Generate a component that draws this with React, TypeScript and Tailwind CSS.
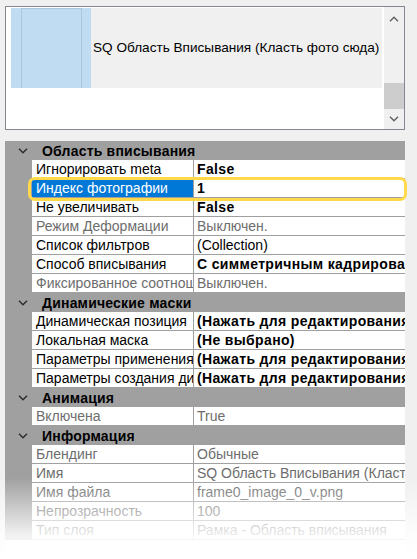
import type { ReactNode } from "react";

type Tone = "bold" | "normal" | "gray";

type Row = {
  label: string;
  selected?: boolean;
  tone: Tone;
  value: string;
};

type Section = { rows: Row[]; title: string };

const sections: Section[] = [
  {
    title: "Область вписывания",
    rows: [
      { label: "Игнорировать meta", tone: "bold", value: "False" },
      { label: "Индекс фотографии", selected: true, tone: "bold", value: "1" },
      { label: "Не увеличивать", tone: "bold", value: "False" },
      { label: "Режим Деформации", tone: "gray", value: "Выключен." },
      { label: "Список фильтров", tone: "normal", value: "(Collection)" },
      {
        label: "Способ вписывания",
        tone: "bold",
        value: "С симметричным кадрированием",
      },
      {
        label: "Фиксированное соотношение",
        tone: "gray",
        value: "Выключен.",
      },
    ],
  },
  {
    title: "Динамические маски",
    rows: [
      {
        label: "Динамическая позиция",
        tone: "bold",
        value: "(Нажать для редактирования)",
      },
      { label: "Локальная маска", tone: "bold", value: "(Не выбрано)" },
      {
        label: "Параметры применения",
        tone: "bold",
        value: "(Нажать для редактирования)",
      },
      {
        label: "Параметры создания динамической маски",
        tone: "bold",
        value: "(Нажать для редактирования)",
      },
    ],
  },
  {
    title: "Анимация",
    rows: [{ label: "Включена", tone: "gray", value: "True" }],
  },
  {
    title: "Информация",
    rows: [
      { label: "Блендинг", tone: "gray", value: "Обычные" },
      {
        label: "Имя",
        tone: "gray",
        value: "SQ Область Вписывания (Класть фото сюда)",
      },
      { label: "Имя файла", tone: "gray", value: "frame0_image_0_v.png" },
      { label: "Непрозрачность", tone: "gray", value: "100" },
      { label: "Тип слоя", tone: "gray", value: "Рамка - Область вписывания" },
    ],
  },
];

function Chevron({ up, className }: { up?: boolean; className: string }) {
  return (
    <svg className={className} viewBox="0 0 10 6" fill="none">
      <path
        d={up ? "M1 5.2L5 1.2L9 5.2" : "M1 0.8L5 4.8L9 0.8"}
        stroke="currentColor"
        strokeWidth="1.4"
      />
    </svg>
  );
}

function CategoryRow({ title }: { title: string }) {
  return (
    <div className="flex h-[19px] items-center bg-[#a0a0a0]">
      <div className="flex w-[32px] shrink-0 justify-center pl-[4px] text-[#2b2b2b]">
        <Chevron className="h-[6px] w-[10px]" />
      </div>
      <span className="pl-[5px] font-bold tracking-[0.2px] whitespace-nowrap text-black">
        {title}
      </span>
    </div>
  );
}

function PropertyRow({ row }: { row: Row }) {
  const valueClass =
    row.tone === "bold"
      ? "font-bold tracking-[0.35px] text-black"
      : row.tone === "gray"
        ? "text-[#6d6d6d]"
        : "text-black";
  return (
    <div className="flex h-[19px]">
      <div className="w-[27px] shrink-0 bg-[#a0a0a0]" />
      <div
        className={`flex w-[162px] shrink-0 items-center overflow-hidden border-r border-b border-[#a0a0a0] pl-[4px] whitespace-nowrap ${
          row.selected
            ? "bg-[#0078d7] text-white"
            : row.tone === "gray"
              ? "bg-white text-[#6d6d6d]"
              : "bg-white text-black"
        }`}
      >
        {row.label}
      </div>
      <div
        className={`flex min-w-0 flex-1 items-center overflow-hidden border-b border-[#a0a0a0] bg-white pl-[3px] whitespace-nowrap ${valueClass}`}
      >
        {row.value}
      </div>
    </div>
  );
}

function PreviewList({ children }: { children: ReactNode }) {
  return (
    <div className="flex h-[124px] w-[400px] border border-[#828790] bg-white">
      <div className="min-w-0 flex-1 pt-[1px] pl-[5px]">{children}</div>
      <div className="flex w-[20px] shrink-0 flex-col items-center bg-[#f0f0f0] text-[#606060]">
        <Chevron up className="mt-[9px] h-[6px] w-[10px]" />
        <div className="mt-[61px] h-[26px] w-full bg-[#cdcdcd]" />
        <Chevron className="mt-[7px] h-[6px] w-[10px]" />
      </div>
    </div>
  );
}

export default function App() {
  return (
    <div className="relative h-[559px] w-[417px] overflow-hidden bg-[#f0f0f0] pt-[6px] pl-[5px] font-['Liberation_Sans',Arial,sans-serif] text-[14px] leading-none">
      <PreviewList>
        <div className="flex h-[80px] w-[371px]">
          <div className="flex h-full w-[80px] shrink-0 bg-[#c0dcf3] pl-[10px]">
            <div className="h-full w-[61px] border-x border-t border-[#a8c7e2]" />
          </div>
          <div className="flex min-w-0 flex-1 items-center overflow-hidden bg-[#f0f0f0] pl-[2px] text-[13.6px] whitespace-nowrap text-black">
            SQ Область Вписывания (Класть фото сюда)
          </div>
        </div>
      </PreviewList>

      <div className="mt-[11px] h-[420px] w-[400px] bg-white">
        {sections.map((section, index) => (
          <div key={index}>
            <CategoryRow title={section.title} />
            {section.rows.map((row, rowIndex) => (
              <PropertyRow key={rowIndex} row={row} />
            ))}
          </div>
        ))}
      </div>

      {/* annotation ring round the selected row */}
      <div className="pointer-events-none absolute top-[177px] left-[28px] h-[24px] w-[379px] rounded-[7px] border-[3px] border-[#ffd94a]" />

      {/* fade-out at the bottom of the shot */}
      <div className="pointer-events-none absolute top-[478px] left-0 h-[81px] w-full bg-gradient-to-b from-white/0 via-white/85 via-70% to-white" />
    </div>
  );
}
